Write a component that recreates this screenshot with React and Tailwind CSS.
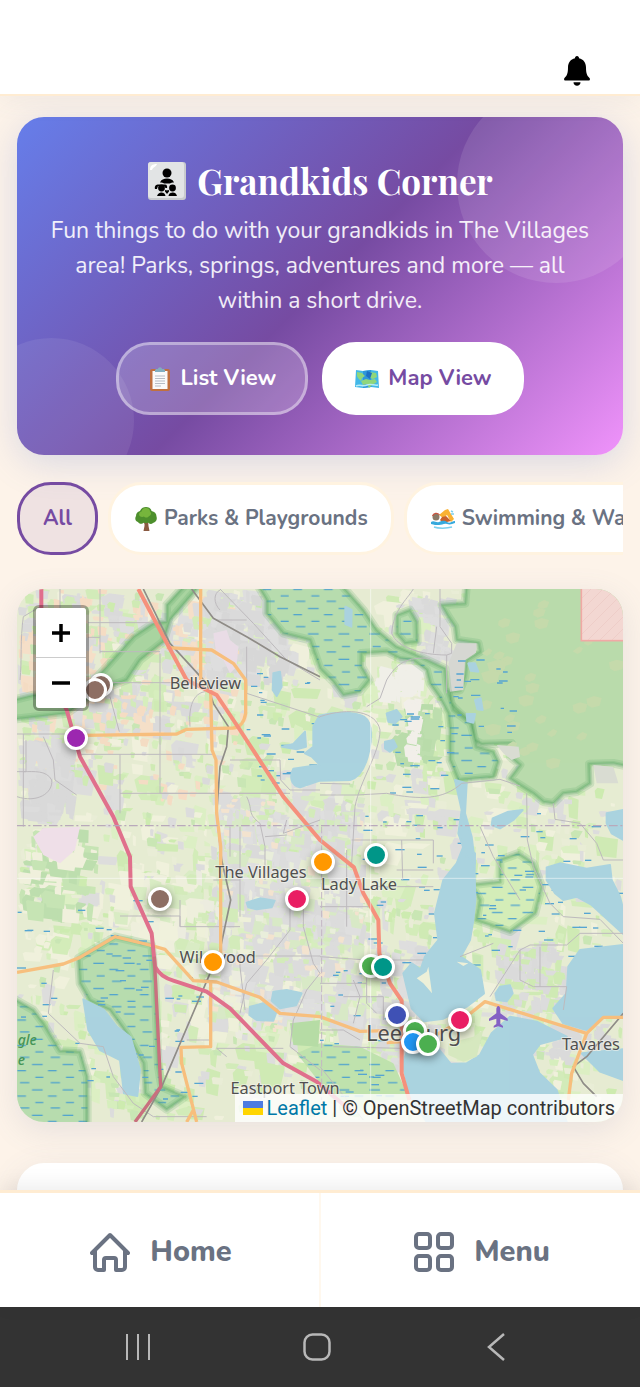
import { useState } from "react";
import clsx from "clsx";

const FILTERS = [
    { id: "all", label: "All" },
    { id: "parks", label: "Parks & Playgrounds", icon: TreeIcon },
    { id: "swimming", label: "Swimming & Water", icon: SwimIcon },
];

// x / y are in map units (see MAP below)
const PINS = [
    { x: 303, y: 315, color: "#8d6e63", name: "Ocala stop" },
    { x: 285, y: 330, color: "#8d6e63", name: "Ocala museum" },
    { x: 229, y: 475, color: "#9c27b0", name: "Market" },
    { x: 969, y: 846, color: "#ff9800", name: "Spanish Springs" },
    { x: 1129, y: 825, color: "#009688", name: "Lady Lake trail" },
    { x: 480, y: 956, color: "#8d6e63", name: "Farm" },
    { x: 890, y: 956, color: "#e91e63", name: "Lake Sumter" },
    { x: 640, y: 1146, color: "#ff9800", name: "Wildwood" },
    { x: 1114, y: 1157, color: "#4caf50", name: "Fruitland Park" },
    { x: 1149, y: 1161, color: "#009688", name: "Fruitland trail" },
    { x: 1190, y: 1306, color: "#3f51b5", name: "Leesburg library" },
    { x: 1380, y: 1321, color: "#e91e63", name: "Leesburg arcade" },
    { x: 1245, y: 1353, color: "#4caf50", name: "Leesburg park" },
    { x: 1240, y: 1386, color: "#2196f3", name: "Splash pad" },
    { x: 1284, y: 1391, color: "#4caf50", name: "Venetian Gardens" },
];

const MAP = { x: 51, y: 27, w: 1818, h: 1599 };

// small seeded generator so the land cover is the same on every render
function makeRandom(seed) {
    let s = seed;
    return () => {
        s = (s * 16807) % 2147483647;
        return s / 2147483647;
    };
}

function makePatches() {
    const rnd = makeRandom(4217);
    const zones = [
        { x: 51, y: 27, w: 1818, h: 1599, n: 900, max: 90, colors: ["#d3ecb9", "#cfeab4", "#f0f1dc", "#dddddc", "#dcefc4", "#e6ecd2"] },
        { x: 51, y: 27, w: 640, h: 460, n: 200, max: 80, colors: ["#dadada", "#dddcdc", "#dedede", "#f6dfc8", "#d3ebba"] },
        { x: 51, y: 27, w: 1818, h: 1599, n: 1300, max: 36, colors: ["#cdebb0", "#d6eebd", "#f0f1dc", "#dcdcdc", "#c9e6b4", "#e9edd6"] },
        { x: 51, y: 27, w: 700, h: 660, n: 260, max: 34, colors: ["#dadada", "#f6dcc4", "#cfeab4", "#f4dcc4"] },
        { x: 51, y: 470, w: 180, h: 260, n: 80, max: 70, colors: ["#d9d9d9", "#dcdcdc"] },
        { x: 51, y: 740, w: 260, h: 300, n: 70, max: 70, colors: ["#bddeae", "#c6e4b4", "#f0f0dc"] },
        { x: 320, y: 860, w: 320, h: 320, n: 70, max: 80, colors: ["#f0f1dc", "#eeefdc", "#d9ecc4"] },
        { x: 600, y: 27, w: 300, h: 300, n: 160, max: 60, colors: ["#d8d8d8", "#dadada", "#dedede"] },
        { x: 620, y: 640, w: 480, h: 720, n: 520, max: 66, colors: ["#dadada", "#dcdcdc", "#dfdfdf", "#d8e9c6"] },
        { x: 620, y: 640, w: 480, h: 720, n: 160, max: 30, colors: ["#d3ebba", "#f3e3cf", "#e9eedb"] },
        { x: 520, y: 860, w: 240, h: 620, n: 60, max: 55, colors: ["#eef0d9", "#d3ebba", "#ececdf"] },
        { x: 1100, y: 1080, w: 240, h: 400, n: 120, max: 46, colors: ["#dadada", "#dedede"] },
        { x: 1480, y: 1080, w: 240, h: 260, n: 110, max: 46, colors: ["#dadada", "#dcdcdc", "#cfeab4"] },
        { x: 1640, y: 1330, w: 220, h: 130, n: 50, max: 46, colors: ["#dadada"] },
        { x: 1230, y: 40, w: 180, h: 220, n: 50, max: 46, colors: ["#dadada", "#dedede"] },
        { x: 1120, y: 250, w: 160, h: 120, n: 34, max: 70, colors: ["#f0efe8"] },
        { x: 1170, y: 370, w: 160, h: 210, n: 40, max: 70, colors: ["#bddeae", "#b9dcab"] },
        { x: 1210, y: 340, w: 60, h: 220, n: 26, max: 50, colors: ["#f2efe9"] },
    ];
    const out = [];
    zones.forEach((z) => {
        for (let i = 0; i < z.n; i++) {
            const w = 10 + rnd() * (z.max - 10);
            const h = 10 + rnd() * (z.max - 10);
            const x = z.x + rnd() * (z.w - w);
            const y = z.y + rnd() * (z.h - h);
            const k = rnd() * 0.35;
            const d = `M${Math.round(x)} ${Math.round(y + h * k)}L${Math.round(x + w * k)} ${Math.round(y)}L${Math.round(x + w)} ${Math.round(y + h * 0.15)}L${Math.round(x + w * (1 - k))} ${Math.round(y + h)}L${Math.round(x + w * 0.1)} ${Math.round(y + h * 0.9)}Z`;
            out.push({ d, fill: z.colors[Math.floor(rnd() * z.colors.length)] });
        }
    });
    return out;
}

function makeScatter(seed, n, zone) {
    const rnd = makeRandom(seed);
    const out = [];
    for (let i = 0; i < n; i++) {
        out.push([Math.round(zone.x + rnd() * zone.w), Math.round(zone.y + rnd() * zone.h), Math.round(10 + rnd() * 18)]);
    }
    return out;
}

const PATCHES = makePatches();
const DASHES = [
    ...makeScatter(91, 90, { x: 1080, y: 700, w: 780, h: 480 }),
    ...makeScatter(33, 55, { x: 51, y: 960, w: 560, h: 600 }),
    ...makeScatter(57, 30, { x: 740, y: 280, w: 220, h: 340 }),
    ...makeScatter(12, 24, { x: 960, y: 1150, w: 200, h: 400 }),
    ...makeScatter(76, 22, { x: 1170, y: 400, w: 200, h: 240 }),
    ...makeScatter(19, 20, { x: 1360, y: 240, w: 180, h: 220 }),
];
const CLEARINGS = makeScatter(301, 34, { x: 1440, y: 60, w: 400, h: 520 });

const NW_STRIP =
    "M30 362L100 345L250 335L320 260L400 170L460 130L500 125L500 75L555 15L600 15L510 120L490 185L420 240L380 300L300 330L200 400L30 419Z";
const FOREST =
    "M1400 10L1395 70L1325 75L1345 110L1365 140L1370 180L1435 190L1440 215L1400 240L1395 290L1380 330L1350 335L1350 370L1380 400L1415 430L1420 480L1445 492L1535 490L1530 530L1560 555L1530 595L1560 615L1600 640L1630 665L1660 670L1690 640L1730 635L1770 610L1768 552L1840 550L1890 560V10H1400Z";
const EMERALDA = "M1500 905L1500 840L1555 820L1600 850L1625 920L1605 1000L1530 1055L1430 1020L1440 960L1415 915Z";

const WETLANDS = [
    "M770 10L800 60L800 100L850 160L930 180L960 265L1000 305L1030 345L1080 335L1108 300L1085 260L1085 220L1160 215L1200 235L1240 240L1280 270L1290 310L1318 350L1345 400L1350 450L1350 540L1375 600L1480 590L1495 545L1480 515L1430 500L1412 430L1360 390L1342 330L1335 265L1260 230L1190 200L1130 150L1090 90L1020 10Z",
    "M1190 105L1230 90L1250 125L1252 185L1215 190L1190 160Z",
    "M235 1135L345 1070L455 1095L465 1210L475 1460L485 1520L555 1550L500 1588L435 1540L430 1450L380 1360L330 1290L270 1262L240 1210Z",
    "M30 1250L100 1290L130 1330L180 1412L240 1415L262 1490L262 1650L30 1650Z",
];

const WATER = [
    "M958 407C1000 396 1060 394 1092 410C1116 426 1116 470 1108 510C1098 560 1080 592 1050 600L960 602L900 622C872 616 868 590 880 566L920 560L960 555L935 530L915 520L940 500L940 440Z",
    "M846 500L880 492L915 455L918 500L890 508Z",
    "M820 280L840 275L845 320L830 348L818 330Z",
    "M250 1258L312 1290L350 1340L392 1372L420 1470L412 1548L372 1540L360 1440L300 1410L265 1350Z",
    "M1390 800L1425 820L1424 880L1426 960L1420 1020L1410 1080L1382 1130L1440 1170L1452 1240L1400 1280L1330 1316L1272 1324L1235 1285L1210 1180L1235 1150L1262 1168L1275 1130L1315 1080L1305 1000L1330 900L1370 850Z",
    "M1228 1395L1310 1400L1352 1452L1400 1450L1440 1425L1475 1360L1530 1310L1610 1325L1700 1370L1620 1392L1596 1424L1618 1480L1670 1530L1700 1626L1280 1626L1230 1550L1208 1450Z",
    "M1740 1110L1870 1095L1870 1310L1815 1310L1760 1350L1690 1330L1660 1285L1700 1240L1705 1160Z",
    "M1640 862L1680 850L1760 866L1830 855L1835 900L1860 950L1870 990L1870 1062L1830 1025L1775 975L1730 950L1690 960L1665 940L1640 900Z",
    "M1745 1420L1870 1408L1870 1500L1800 1475Z",
    "M1365 600L1385 690L1375 760L1400 830L1425 850L1415 770L1395 700L1400 610Z",
    "M740 968L780 955L824 962L815 982L770 988L745 982Z",
    "M820 1235L860 1230L905 1240L888 1276L840 1285L815 1262Z",
    "M750 1280L790 1270L832 1288L820 1322L770 1320L748 1305Z",
    "M1160 400L1190 390L1205 410L1185 430L1165 425Z",
    "M1155 485L1180 480L1190 500L1170 515L1155 505Z",
    "M1478 715L1525 695L1568 690L1540 720L1500 745L1475 735Z",
    "M1820 700L1870 690L1870 780L1835 760L1820 730Z",
    "M1487 1240L1500 1220L1530 1216L1538 1240L1520 1264L1490 1260Z",
    "M1400 402L1425 402L1420 428L1402 424ZM1405 250L1425 250L1435 275L1412 272ZM1425 360L1442 355L1448 390L1432 388Z",
    "M1036 80L1055 90L1054 140L1036 132Z",
];

const MINOR_ROADS = [
    "M180 27V90M300 27V220M265 128H470M265 172H300M300 215H480M300 308H560M480 220V640M51 462H210M70 462V740M78 480V575H51M130 470L160 540L165 600L230 645M51 650C110 670 160 640 155 600C140 570 100 575 70 575",
    "M330 350L358 455M240 523H640M360 523V700M360 640H860M480 640H870M570 440C565 380 580 340 615 335M660 27L760 130L860 240L960 300M740 200L740 340L960 412M660 90C640 70 640 40 660 30M650 120H740",
    "M70 110C60 180 66 240 60 300M70 110L120 80M690 540H840L842 600L870 630H960M740 650C760 690 740 700 780 730L795 800V900M795 770L860 765M860 720L850 760L960 720",
    "M690 740V830M720 740V1010M360 1008H540V1040H720M540 960V1040M720 900H640M720 1130V1160L735 1290M650 1128H960M870 960V1050L800 1140L740 1210L720 1300M910 960V1040L940 1150L960 1180L920 1230L880 1320L870 1400L960 1470",
    "M160 1170L145 1300L240 1390L310 1400L340 1490L400 1570L460 1610H620M650 1405H850M650 1405L680 1430M960 1130L1100 1140L1270 1140M1040 810V1040M1110 920H1300M960 980H1110M1205 780L1208 900M1190 870H1300M1055 780H1300M1300 780V850M960 1460L1090 1620",
    "M960 410C1050 380 1130 395 1140 450C1140 520 1080 600 1065 680L1055 850M960 610L1050 612M960 645H1070L1160 640C1260 660 1330 660 1385 610L1500 598L1560 618M1100 380L1140 355L1160 300C1190 250 1220 230 1290 235M1240 27C1220 60 1180 90 1175 160C1190 200 1260 225 1340 225L1340 340M1320 27L1320 140L1355 190V220L1340 225M1300 220L1310 140",
    "M1580 640L1582 780L1600 860L1650 970L1690 1010L1800 1018L1870 1090M1660 670L1665 718L1740 730L1790 790L1810 840H1870M1560 960L1480 830L1440 740M1470 1250L1560 1110L1590 1095L1700 1095L1740 1060L1870 1060M1560 1110V1200L1600 1220H1700L1690 1290M1620 1100V1220M1380 1130L1480 1090",
    "M1030 1250H1150V1320M1100 1140V1270L1130 1300M960 1350H1030L1080 1380M1060 1200L1080 1250L1060 1330M1000 1400L1200 1405M960 1210H1100M630 1380H560",
];

const LABELS = [
    { x: 616, y: 326, size: 49, text: "Belleview" },
    { x: 783, y: 893, size: 49, text: "The Villages" },
    { x: 1077, y: 931, size: 49, text: "Lady Lake" },
    { x: 653, y: 1149, size: 49, text: "Wildwood" },
    { x: 1241, y: 1383, size: 65, text: "Leesburg" },
    { x: 1773, y: 1409, size: 49, text: "Tavares" },
    { x: 855, y: 1541, size: 49, text: "Eastport Town" },
];

function ClipboardIcon() {
    return (
        <svg viewBox="0 0 24 26" className="h-[26px] w-6 shrink-0" aria-hidden="true">
            <rect x="2" y="3" width="20" height="22" rx="2" fill="#c0703f" />
            <rect x="4.500" y="5" width="15" height="18" fill="#fafafa" />
            <path d="M7 10h10M7 12.500h10M7 15h10M7 17.500h10M7 20h6" stroke="#b7bcc4" strokeWidth="1" />
            <path d="M7 6V4.500c0-1 1-1.500 2-1.500h.8a2.300 2.300 0 0 1 4.400 0h.8c1 0 2 .5 2 1.500V6z" fill="#82aec0" />
        </svg>
    );
}

function WorldMapIcon() {
    return (
        <svg viewBox="0 0 26 24" className="h-6 w-[26px] shrink-0" aria-hidden="true">
            <path d="M2 3l7 1 8-1 7 1 1 17-8-1-8 1-8-1z" fill="#42b8e8" />
            <path d="M9 4l8-1 .5 17L9 21z" fill="#2f97d9" />
            <path d="M3 5l5 1 3 3-3 2-1 3-3-3-1-2zM16 5l6 1 1 4-4 2-3-1-3-3zM7 14l5-2 4 1 5-1 2 3-5 3-3 3-2-4-4 1z" fill="#8fd67b" />
            <path d="M13 4l5 2-2 6-4-3z" fill="#1c6fc4" />
            <path d="M2 19c4-2 7 1 11-1s7 1 11 0" stroke="#b8ecf5" strokeWidth="1.500" fill="none" />
        </svg>
    );
}

function TreeIcon() {
    return (
        <svg viewBox="0 0 24 26" className="h-[26px] w-6 shrink-0" aria-hidden="true">
            <path d="M10.500 14h3.500l.5 6 1 5H9.500l1-5z" fill="#8a5a41" />
            <path d="M12 18l-4-4M12.500 17l4-4" stroke="#8a5a41" strokeWidth="1.500" />
            <path d="M12 1c3 0 5 1.500 5.500 4 3 .5 5 2.500 5 5.500 1 3-.5 6-3.500 6.500-1.500 1.500-4 1-5-.5-1 1-3 1-4 0-2 2-5 1.500-6-.5C1.500 15.500.500 12.500 2 10c0-2.500 1.500-4.500 4-5C7 2.500 9 1 12 1z" fill="#4d8f2d" />
            <path d="M11 2c3-.5 5 1 5 3.500 2 1.500 1 4-1 4.500-1 2-4 2-5 .5-2 1-5 0-5-2 0-2 1.500-3 2.500-3C8 3.500 9 2.500 11 2z" fill="#76b53c" />
        </svg>
    );
}

function SwimIcon() {
    return (
        <svg viewBox="0 0 26 24" className="h-6 w-[26px] shrink-0" aria-hidden="true">
            <path d="M9 8l6-5 3-1 6 10-3 3-4-7-4 3z" fill="#f9b233" />
            <path d="M12 10l4-1 5 5-8 2-3-3z" fill="#c9622c" />
            <circle cx="6" cy="10" r="3.500" fill="#8b7a68" />
            <path d="M2.500 9c1-3 5-3.500 7-1" stroke="#c9543f" strokeWidth="1.200" fill="none" />
            <path d="M1 15c3-2 5 1 8 0s5-2 8 0 5-1 8-1v2c-3 1-5 2-8 1s-5 1-8 1-5 0-8-1z" fill="#35a9dd" />
            <path d="M4 20c4 1.500 13 1.500 18 0M21 4l2 1M21 7l3 0" stroke="#7cd0ee" strokeWidth="1.500" fill="none" />
        </svg>
    );
}

function FamilyIcon() {
    return (
        <svg viewBox="0 0 40 40" className="size-10 shrink-0" aria-hidden="true">
            <rect x="1" y="1" width="38" height="38" rx="3" fill="#c9cbce" />
            <rect x="1" y="1" width="36" height="36" rx="3" fill="#e2e4e5" />
            <path d="M3 9C3 5 5 3 10 3c-1 3-4 3-5 6z" fill="#fff" />
            <circle cx="20" cy="12" r="4.500" />
            <path d="M13 21.500c1-3 4-4 7-4s6 1 7 4c-2 0-3 0-4 1h-6c-1-1-2-1-4-1z" />
            <circle cx="14.500" cy="27" r="3.400" />
            <circle cx="25.500" cy="27" r="3.400" />
            <path d="M8 28c-1-4 2-5 5-4.500h5c2 0 2.500 2 2 3.500h-1.500l-1.500-2-6 0-1 3z" />
            <path d="M10 35c1-3 3-3.500 4-3.500 2 0 4 .5 4.500 3.500zM21.500 35c.500-3 2.500-3.500 4.500-3.500s3 .5 4 3.500z" />
            <path d="M20 33l-2-2.500c-.5-1.500 1.500-2 2-.7.500-1.300 2.500-.8 2 .7z" />
        </svg>
    );
}

// green area with a darker band along its border
function ProtectedArea({ d, fill, marsh }) {
    return (
        <g strokeLinejoin="round">
            <path d={d} fill={fill} />
            {marsh && <path d={d} fill="url(#marsh)" />}
            <path d={d} fill="none" stroke="#5faa68" strokeOpacity=".2" strokeWidth="26" />
            <path d={d} fill="none" stroke="#5faa68" strokeOpacity=".26" strokeWidth="14" />
            <path d={d} fill="none" stroke="#4f9e5b" strokeOpacity=".26" strokeWidth="6" />
        </g>
    );
}

function MapCanvas() {
    return (
        <svg
            viewBox={`${MAP.x} ${MAP.y} ${MAP.w} ${MAP.h}`}
            preserveAspectRatio="none"
            className="block h-full w-full"
            aria-hidden="true"
        >
            <defs>
                <pattern id="marsh" width="92" height="76" patternUnits="userSpaceOnUse">
                    <path d="M4 10h32M52 28h26M14 48h24M60 64h28" stroke="#4a9fd0" strokeWidth="4" />
                </pattern>
                <pattern id="hatch" width="36" height="36" patternUnits="userSpaceOnUse">
                    <path d="M0 36L36 0" stroke="#ecc8c3" strokeWidth="2" />
                </pattern>
            </defs>
            <rect x={MAP.x} y={MAP.y} width={MAP.w} height={MAP.h} fill="#e6ecd2" />
            {PATCHES.map((p, i) => (
                <path key={i} d={p.d} fill={p.fill} />
            ))}
            <path d="M100 770L130 745L240 740L225 810L180 850L130 825Z" fill="#efdfe8" />
            <path d="M640 160L680 150L690 180L715 200L710 260L690 280L670 240L650 230Z" fill="#e9dce6" />

            {/* green strip in the north-west */}
            <ProtectedArea d={NW_STRIP} fill="#a9d4a0" />

            {/* national forest */}
            <ProtectedArea d={FOREST} fill="#b9dbac" />
            {CLEARINGS.map(([x, y, w], i) => (
                <path key={i} d={`M${x} ${y}l${w} -8l${w} 6l-6 ${w}l-${w} 6l-14 -8Z`} fill="#c5daac" />
            ))}
            <path d="M1370 190L1430 190L1428 218L1395 240L1390 330L1350 335L1345 250Z" fill="#d6d8d2" />
            <path d="M1535 540L1560 530L1556 500L1490 495L1510 520ZM1780 555L1840 560L1855 610H1790Z" fill="#d9dcd2" />
            <rect x="1744" y="10" width="140" height="172" fill="#f3d8d2" />
            <rect x="1744" y="10" width="140" height="172" fill="url(#hatch)" stroke="#f0a9a6" strokeWidth="5" />

            {WETLANDS.map((d) => (
                <ProtectedArea key={d} d={d} fill="#b7dcae" marsh />
            ))}
            <path d="M890 1420L960 1390L1080 1400L1180 1450L1230 1560L1000 1560Z" fill="#bfe2ad" />
            <path d="M890 1420L960 1390L1080 1400L1180 1450L1230 1560L1000 1560Z" fill="url(#marsh)" />
            <path d="M870 1330L960 1320L955 1400L880 1395Z" fill="#b6dca5" />
            <ProtectedArea d={EMERALDA} fill="#d4edb8" marsh />
            {DASHES.map(([x, y, w], i) => (
                <path key={i} d={`M${x} ${y}h${w}`} stroke="#56a5d2" strokeWidth="4" />
            ))}
            {WATER.map((d) => (
                <path key={d} d={d} fill="#aad3df" stroke="#aad3df" strokeWidth="6" strokeLinejoin="round" />
            ))}
            <path d="M1250 1195L1280 1175L1285 1160L1296 1240L1270 1210ZM1370 1145L1405 1150L1390 1158Z" fill="#edf0d8" />
            <path d="M1345 1390L1420 1370L1450 1350L1430 1430L1390 1445L1345 1425Z" fill="#d6e8bf" />

            <g fill="none" strokeLinejoin="round">
                <g stroke="#bdbabd" strokeWidth="3">
                    {MINOR_ROADS.map((d) => (
                        <path key={d} d={d} />
                    ))}
                </g>
                <g stroke="#8f8c87" strokeWidth="5">
                    <path d="M430 27L510 190L620 310L640 370L685 440L680 500L660 560L650 700L665 840L692 960L660 1110L630 1180L485 1520L425 1626" />
                    <path d="M575 27L640 115L740 170L840 230L960 290" />
                    <path d="M1870 1300L1760 1430L1720 1460L1750 1510L1790 1550" />
                </g>
                <g stroke="#f7bf7e" strokeWidth="10">
                    <path d="M602 27V300M500 203L635 210L700 250L737 300V400Q730 442 700 444L560 448L530 462L250 466" />
                    <path d="M632 330L636 510L648 540L650 700L662 800V1120M632 1200V1400L543 1402L545 1450L590 1626M580 1590L560 1626" />
                    <path d="M51 1177L190 1152L240 1132L345 1070L460 1098L495 1108L580 1202L650 1206L780 1252L840 1300L960 1310L1080 1354L1160 1352M1160 1388L1280 1380L1380 1325L1455 1265L1760 1360L1810 1312H1870M1760 1360L1715 1480L1705 1560" />
                </g>
                <g stroke="#f5907c" strokeWidth="12">
                    <path d="M415 27L490 170L560 300L650 345L720 450L850 650L960 780L1062 862L1090 940L1135 1020L1138 1120L1170 1210L1205 1262V1480L1228 1560" />
                </g>
                <g stroke="#e0708c" strokeWidth="12">
                    <path d="M124 27V100Q150 300 200 390L240 530L290 620L340 710L390 830L392 920L455 1060L465 1160Q480 1190 520 1202L620 1235L690 1285L850 1450L950 1505L1060 1600" />
                    <path d="M463 1130L482 1520L405 1626" stroke="#c9717f" strokeWidth="10" />
                </g>
            </g>

            <path d="M51 737H1869" stroke="#b9a9bb" strokeWidth="4" strokeDasharray="26 8 6 8" />
            <path d="M965 740V1560" stroke="#c3b6c4" strokeWidth="3" strokeDasharray="20 8" />
            <path d="M1112 27V1626M51 895H1869" stroke="#fff" strokeWidth="2" opacity=".8" />
            <path
                d="M1495 1278c4 0 6 6 6 10v12l22 16v7l-22-7v16l8 6v5l-14-4-14 4v-5l8-6v-16l-22 7v-7l22-16v-12c0-4 2-10 6-10z"
                fill="#8461c4"
            />
            <g fontFamily="Noto Sans, sans-serif">
                <g fill="#505050" stroke="#f4f4ee" strokeOpacity=".6" strokeWidth="6" paintOrder="stroke" textAnchor="middle">
                    {LABELS.map((l) => (
                        <text key={l.text} x={l.x} y={l.y} fontSize={l.size}>
                            {l.text}
                        </text>
                    ))}
                </g>
                <g fill="#459456" fontSize="42" fontStyle="italic" fontWeight="500">
                    <text x="53" y="1394">gle</text>
                    <text x="53" y="1454">e</text>
                </g>
            </g>
        </svg>
    );
}

function Hero({ view, onChange }) {
    const views = [
        { id: "list", label: "List View", icon: ClipboardIcon },
        { id: "map", label: "Map View", icon: WorldMapIcon },
    ];
    return (
        <section className="relative overflow-hidden rounded-[27px] bg-[linear-gradient(135deg,#667eea_0%,#764ba2_50%,#f093fb_100%)] px-6 py-10 text-center text-white">
            <div className="absolute -top-8 -right-8 size-[198px] rounded-full bg-white/10" />
            <div className="absolute -bottom-12 -left-12 size-[165px] rounded-full bg-white/8" />
            <div className="relative">
                <h1 className="flex items-center justify-center gap-[10px] font-['Playfair_Display','Liberation_Serif',serif] text-[35px] leading-[48px] font-bold">
                    <FamilyIcon />
                    Grandkids Corner
                </h1>
                <p className="mt-2 text-[23px] leading-[35px] text-white/90">
                    Fun things to do with your grandkids in The Villages area! Parks, springs, adventures and more — all within a short drive.
                </p>
                <div className="mt-6 flex justify-center gap-[14px]">
                    {views.map((v) => (
                        <button
                            key={v.id}
                            type="button"
                            onClick={() => onChange(v.id)}
                            className={clsx(
                                "flex h-[73px] items-center gap-2 rounded-[34px] border-[3px] px-[29px] text-[22px] font-bold",
                                view === v.id ? "border-white bg-white text-[#764ba2]" : "border-white/40 bg-white/20 text-white"
                            )}
                        >
                            <v.icon />
                            {v.label}
                        </button>
                    ))}
                </div>
            </div>
        </section>
    );
}

function MapView() {
    return (
        <section aria-label="Map" className="relative aspect-[606/533] overflow-hidden rounded-[27px] shadow-[0_8px_32px_rgba(90,110,150,0.14)]">
            <MapCanvas />
            {PINS.map((p) => (
                <button
                    key={p.name}
                    type="button"
                    aria-label={p.name}
                    className="absolute size-6 -translate-x-1/2 -translate-y-1/2 rounded-full border-[3px] border-white shadow-[0_3px_8px_rgba(0,0,0,0.4)]"
                    style={{
                        left: `${((p.x - MAP.x) / MAP.w) * 100}%`,
                        top: `${((p.y - MAP.y) / MAP.h) * 100}%`,
                        backgroundColor: p.color,
                    }}
                />
            ))}
            <div className="absolute top-4 left-4 flex flex-col rounded-md border-[3px] border-black/30 bg-clip-padding text-black">
                <button type="button" aria-label="Zoom in" className="flex h-[50px] w-[50px] items-center justify-center rounded-t-[3px] border-b border-[#ccc] bg-white">
                    <svg viewBox="0 0 18 18" className="size-[18px]"><path d="M9 0v18M0 9h18" stroke="currentColor" strokeWidth="3.500" /></svg>
                </button>
                <button type="button" aria-label="Zoom out" className="flex h-[50px] w-[50px] items-center justify-center rounded-b-[3px] bg-white">
                    <svg viewBox="0 0 18 18" className="size-[18px]"><path d="M0 9h18" stroke="currentColor" strokeWidth="3.500" /></svg>
                </button>
            </div>
            <div className="absolute right-0 bottom-0 flex h-7 items-center bg-white/80 px-2 font-[Roboto,sans-serif] text-xl whitespace-pre text-[#333]">
                <a href="#leaflet" className="flex items-center gap-1 text-[#0078a8]">
                    <svg viewBox="0 0 20 14" className="h-[14px] w-5">
                        <path d="M0 0h20v7H0z" fill="#4c7be1" />
                        <path d="M0 7h20v7H0z" fill="#ffd500" />
                    </svg>
                    Leaflet
                </a>
                {" | © OpenStreetMap contributors"}
            </div>
        </section>
    );
}

export default function App() {
    const [view, setView] = useState("map");
    const [filter, setFilter] = useState("all");

    return (
        <div className="flex h-screen flex-col bg-[#fdf3e9] font-[Nunito,Lato,sans-serif]">
            <header className="relative z-10 flex h-24 shrink-0 items-end justify-end border-b-2 border-[#ffecd2] bg-white pr-[50px] pb-2 shadow-[0_4px_24px_rgba(90,110,150,0.08)]">
                <button type="button" aria-label="Notifications">
                    <svg viewBox="0 0 26 30" className="h-[30px] w-[26px]">
                        <path d="M13 0c1.300 0 2 1 2 2.200 4.500 1 7 4.300 7 9.300 0 6 1 8 3.500 10.500.8.900.5 2.500-1 2.500h-23c-1.500 0-1.800-1.600-1-2.500C3 19.500 4 17.500 4 11.500c0-5 2.500-8.300 7-9.300C11 1 11.700 0 13 0z" />
                        <path d="M9.500 26.300h7c0 2-1.500 3.500-3.500 3.500s-3.500-1.500-3.500-3.500z" />
                    </svg>
                </button>
            </header>

            <main className="min-h-0 flex-1 overflow-y-auto px-[17px] pt-[21px] [scrollbar-width:none]">
                <div className="rounded-[27px] shadow-[0_8px_36px_rgba(100,130,210,0.24)]">
                    <Hero view={view} onChange={setView} />
                </div>

                <div className="mt-[27px] flex gap-[10px] overflow-x-auto [scrollbar-width:none]">
                    {FILTERS.map((f) => (
                        <button
                            key={f.id}
                            type="button"
                            onClick={() => setFilter(f.id)}
                            className={clsx(
                                "flex h-[73px] shrink-0 items-center gap-[6px] rounded-[34px] border-[3px] px-[23px] text-[21px] font-bold",
                                filter === f.id ? "border-[#764ba2] bg-[#764ba2]/10 text-[#764ba2]" : "border-[#fff3e0] bg-white text-gray-500"
                            )}
                        >
                            {f.icon && <f.icon />}
                            {f.label}
                        </button>
                    ))}
                </div>

                <div className="mt-[34px]">
                    <MapView />
                </div>

                <section className="mt-[41px] h-40 rounded-[27px] bg-white shadow-[0_8px_32px_rgba(90,110,150,0.12)]" />
            </main>

            <nav className="relative z-10 flex h-[117px] shrink-0 border-t-[3px] border-[#ffecd2] bg-white text-[29px] font-extrabold text-gray-500 shadow-[0_-4px_20px_rgba(0,0,0,0.08)]">
                <a href="#home" className="flex flex-1 items-center justify-center gap-5 border-r-2 border-[#fff8ee] pt-[3px] pl-[3px]">
                    <svg viewBox="0 0 40 40" className="size-10" fill="none" stroke="currentColor" strokeWidth="4" strokeLinecap="round" strokeLinejoin="round">
                        <path d="M2 21L20 3l18 18M5 18v17a3 3 0 0 0 3 3h6V28a2 2 0 0 1 2-2h8a2 2 0 0 1 2 2v10h6a3 3 0 0 0 3-3V18" />
                    </svg>
                    Home
                </a>
                <a href="#menu" className="flex flex-1 items-center justify-center gap-5 pt-[3px] pl-[3px]">
                    <svg viewBox="0 0 40 40" className="size-10" fill="none" stroke="currentColor" strokeWidth="4">
                        <rect x="2" y="2" width="14" height="14" rx="3" />
                        <rect x="24" y="2" width="14" height="14" rx="3" />
                        <rect x="2" y="24" width="14" height="14" rx="3" />
                        <rect x="24" y="24" width="14" height="14" rx="3" />
                    </svg>
                    Menu
                </a>
            </nav>

            <div className="grid h-20 shrink-0 grid-cols-3 items-center bg-[#333] pr-[54px] pl-12 text-[#b8b8b8]">
                <button type="button" aria-label="Recent apps" className="flex justify-center">
                    <svg viewBox="0 0 26 28" className="h-7 w-[26px]" stroke="currentColor" strokeWidth="2"><path d="M2 1v26M13 1v26M24 1v26" /></svg>
                </button>
                <button type="button" aria-label="Home screen" className="flex justify-center">
                    <svg viewBox="0 0 28 28" className="size-7" fill="none" stroke="currentColor" strokeWidth="2.500"><rect x="1.500" y="1.500" width="25" height="25" rx="8" /></svg>
                </button>
                <button type="button" aria-label="Back" className="flex justify-center">
                    <svg viewBox="0 0 18 28" className="h-7 w-[18px]" fill="none" stroke="currentColor" strokeWidth="2.500"><path d="M17 1L2 14l15 13" /></svg>
                </button>
            </div>
        </div>
    );
}
